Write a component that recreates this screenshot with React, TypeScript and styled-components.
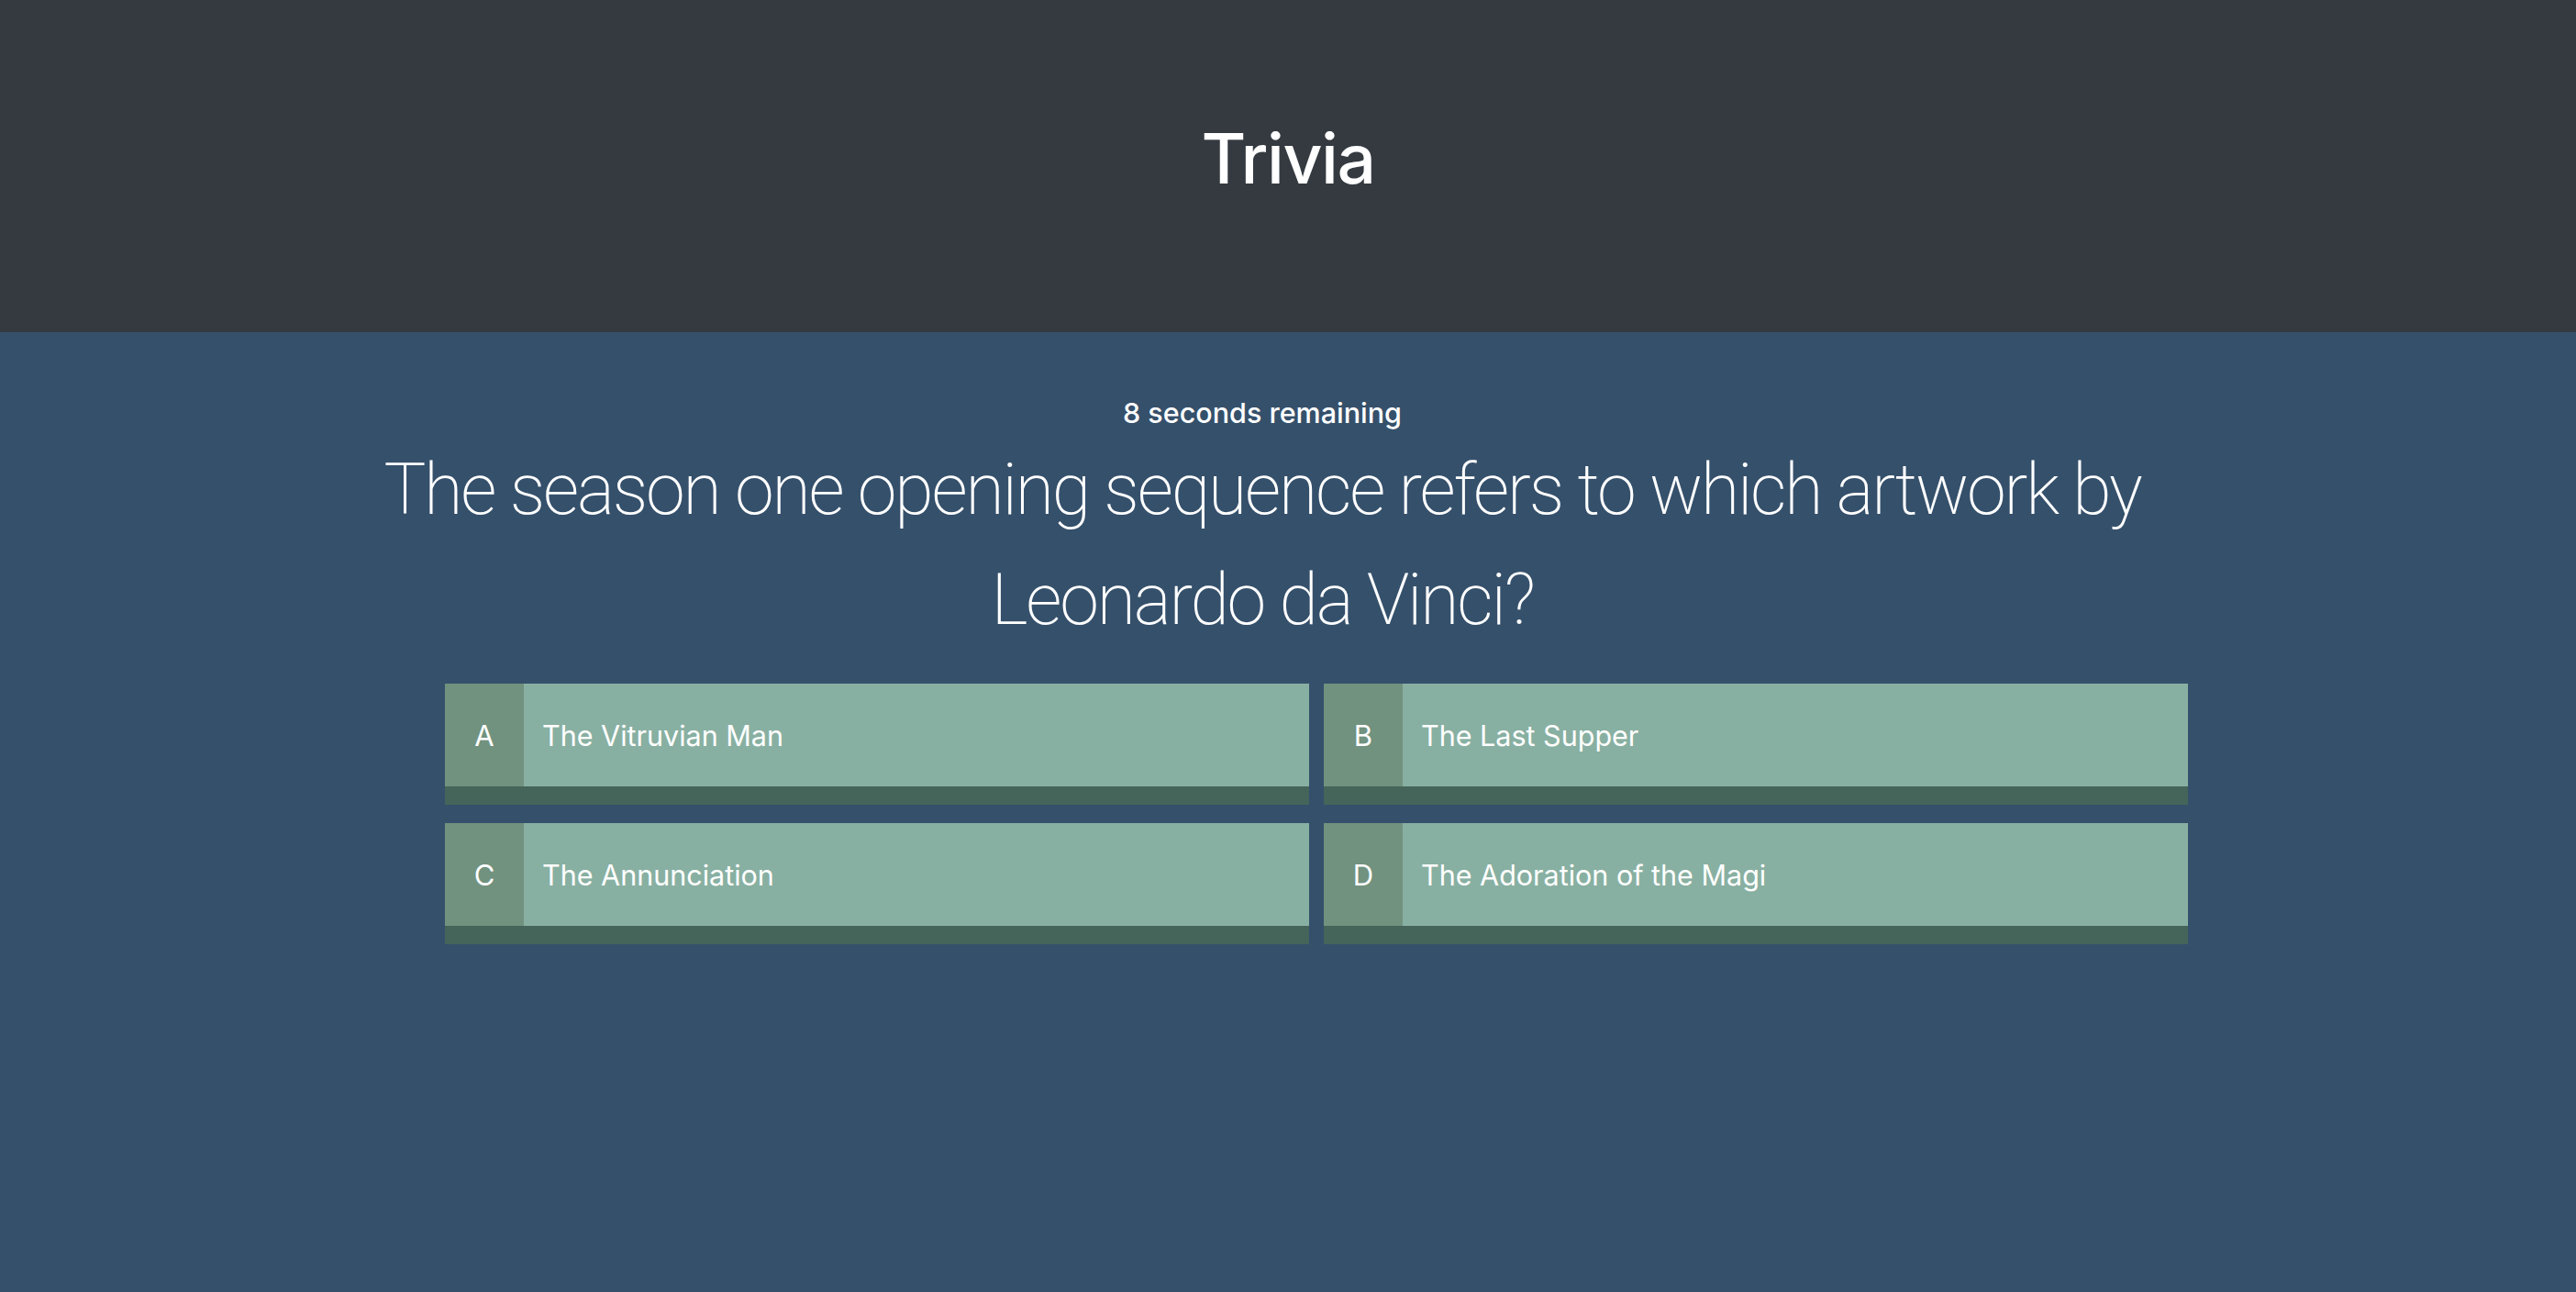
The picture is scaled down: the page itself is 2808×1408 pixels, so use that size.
import React from 'react'
import styled, { createGlobalStyle } from 'styled-components'

const GlobalStyle = createGlobalStyle`
  html, body {
    margin: 0;
    padding: 0;
    background: #35506b;
  }
  body {
    font-family: Inter, "Noto Sans", "Liberation Sans", sans-serif;
    color: #ffffff;
  }
`

const Header = styled.header`
  display: flex;
  align-items: center;
  justify-content: center;
  height: 362px;
  background-color: #343a40;
`

const Title = styled.h1`
  margin: 0 0 18px;
  font-size: 75px;
  font-weight: 500;
  letter-spacing: -1.5px;
  color: #ffffff;
`

const Main = styled.main`
  min-height: 1046px;
  padding-top: 64px;
  box-sizing: border-box;
  background-color: #35506b;
`

const Column = styled.div`
  width: 2752px;
  text-align: center;
`

const Timer = styled.div`
  font-size: 30.5px;
  font-weight: 500;
  line-height: 48px;
`

const Question = styled.h2`
  width: 2000px;
  margin: 0 auto;
  font-family: Roboto, "Liberation Sans", sans-serif;
  font-size: 77px;
  font-weight: 200;
  line-height: 120px;
  letter-spacing: -2.2px;
`

const AnswerGrid = styled.div`
  display: grid;
  grid-template-columns: 942px 942px;
  column-gap: 16px;
  row-gap: 20px;
  width: 1900px;
  margin: 31px 0 0 485px;
`

const Answer = styled.button`
  display: flex;
  flex-flow: row nowrap;
  height: 132px;
  padding: 0;
  border: none;
  border-bottom: 20px solid #45645a;
  box-sizing: border-box;
  background-color: #88b0a2;
  color: #ffffff;
  font-family: inherit;
  text-align: left;
  cursor: pointer;
`

const Letter = styled.span`
  display: flex;
  align-items: center;
  justify-content: center;
  width: 86px;
  background-color: #71927f;
  font-size: 31px;
  font-weight: 400;
`

const Label = styled.span`
  display: flex;
  align-items: center;
  padding-left: 20px;
  font-size: 30.5px;
  font-weight: 400;
`

const answers = [
  { letter: 'A', text: 'The Vitruvian Man' },
  { letter: 'B', text: 'The Last Supper' },
  { letter: 'C', text: 'The Annunciation' },
  { letter: 'D', text: 'The Adoration of the Magi' },
]

const App = () => {
  return <>
    <GlobalStyle />
    <Header>
      <Title>Trivia</Title>
    </Header>
    <Main>
      <Column>
        <Timer>8 seconds remaining</Timer>
        <Question>The season one opening sequence refers to which artwork by Leonardo da Vinci?</Question>
      </Column>
      <AnswerGrid>
        {answers.map(a => (
          <Answer key={a.letter}>
            <Letter>{a.letter}</Letter>
            <Label>{a.text}</Label>
          </Answer>
        ))}
      </AnswerGrid>
    </Main>
  </>
}

export default App
